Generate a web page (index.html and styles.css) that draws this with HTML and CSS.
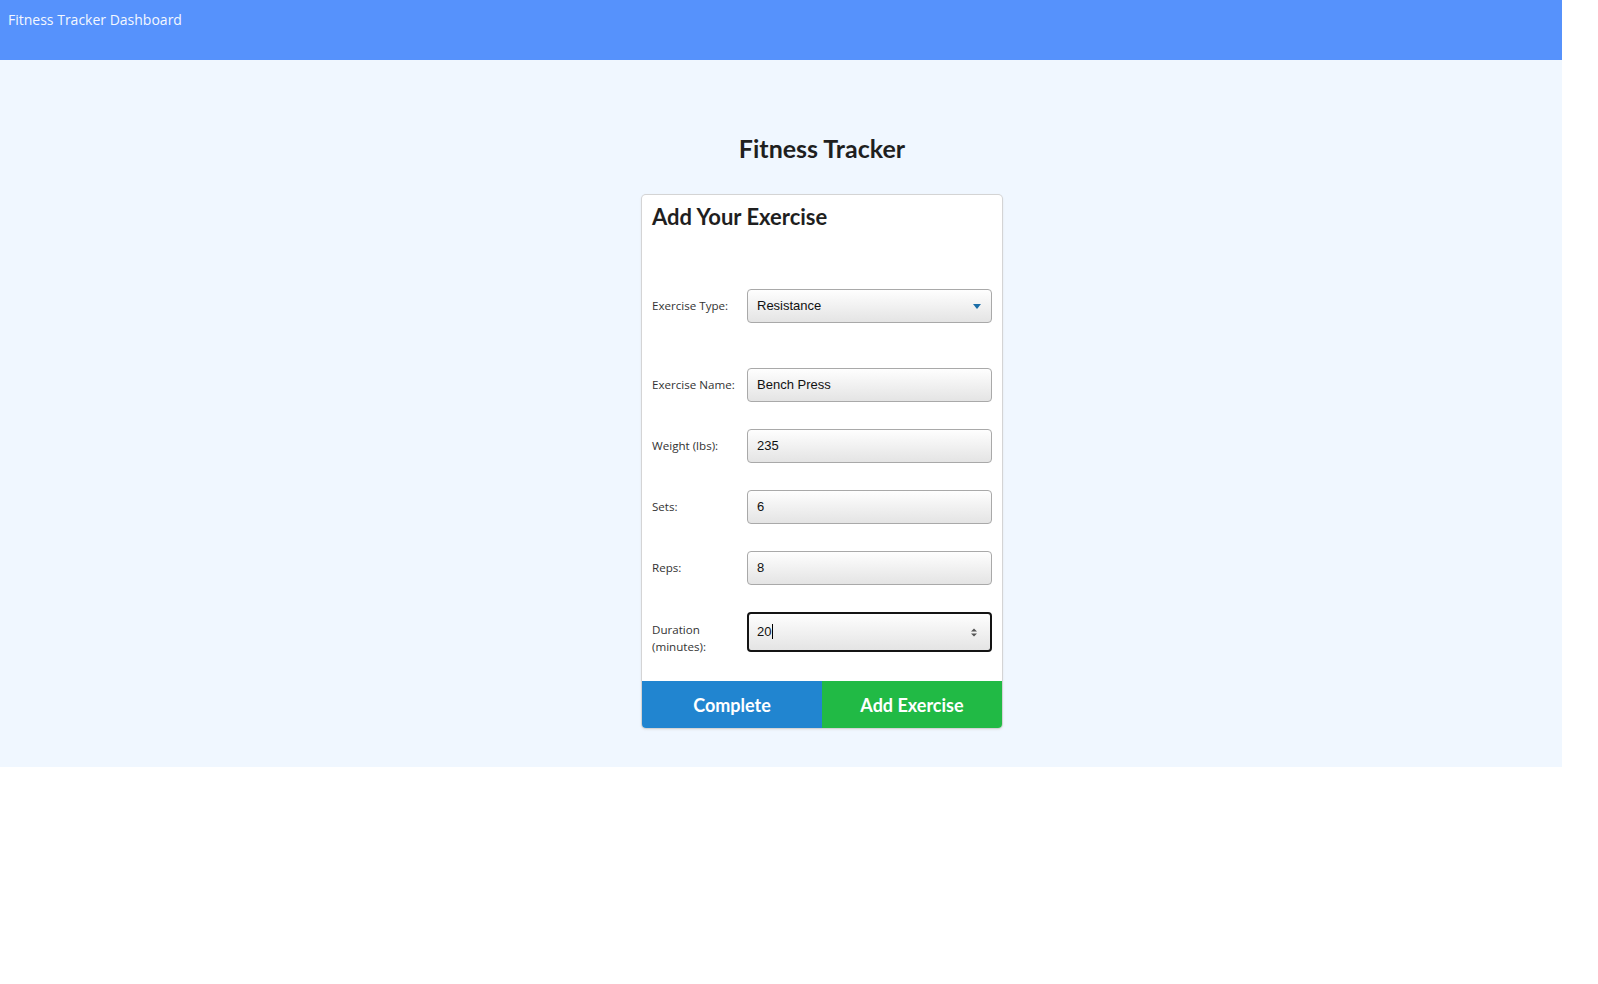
FILE: index.html
```html
<!DOCTYPE html>
<html lang="en">
<head>
<meta charset="utf-8">
<title>Fitness Tracker Dashboard</title>
<link rel="stylesheet" href="styles.css">
</head>
<body>
<div class="app">
  <header class="topbar">Fitness Tracker Dashboard</header>
  <main class="main">
    <div class="content">
      <h1 class="page-title">Fitness Tracker</h1>
      <div class="card">
        <h2 class="card-title">Add Your Exercise</h2>
        <form class="form">
          <div class="row row-type">
            <label class="label">Exercise Type:</label>
            <div class="field select">
              <span>Resistance</span>
              <svg class="caret-down" width="8" height="5" viewBox="0 0 8 5"><path d="M0 0h8L4 5z" fill="#1b6ea8"/></svg>
            </div>
          </div>
          <div class="row row-first">
            <label class="label">Exercise Name:</label>
            <div class="field"><span>Bench Press</span></div>
          </div>
          <div class="row">
            <label class="label">Weight (lbs):</label>
            <div class="field"><span>235</span></div>
          </div>
          <div class="row">
            <label class="label">Sets:</label>
            <div class="field"><span>6</span></div>
          </div>
          <div class="row">
            <label class="label">Reps:</label>
            <div class="field"><span>8</span></div>
          </div>
          <div class="row row-duration">
            <label class="label label-two">Duration<br>(minutes):</label>
            <div class="field focused">
              <span>20</span><span class="text-caret"></span>
              <svg class="spinner" width="6" height="9" viewBox="0 0 6 9"><path d="M0 3.5L3 0.5L6 3.5z M0 5.5L3 8.5L6 5.5z" fill="#555"/></svg>
            </div>
          </div>
        </form>
        <div class="buttons">
          <button type="button" class="btn btn-blue">Complete</button>
          <button type="button" class="btn btn-green">Add Exercise</button>
        </div>
      </div>
    </div>
  </main>
</div>
</body>
</html>
```
FILE: styles.css
```css
* { box-sizing: border-box; }
html, body { margin: 0; padding: 0; background: #ffffff; }
body { font-family: Lato, "Open Sans", sans-serif; color: rgba(0,0,0,0.87); }

.app { width: 1562px; }

.topbar {
  height: 60px;
  background: #5692fc;
  color: #f4f8ff;
  font-family: "Open Sans", "Noto Sans", sans-serif;
  font-size: 14px;
  padding: 10px 8px 0;
  line-height: 20px;
}

.main {
  background: #f0f7ff;
  height: 707px;
  padding: 72px 0 0 82px;
}

.content {
  display: flex;
  flex-direction: column;
  align-items: center;
}

.page-title {
  margin: 0;
  font-family: Lato, sans-serif;
  font-weight: 700;
  font-size: 25px;
  line-height: 32px;
  color: #1f1f1f;
}

.card {
  margin-top: 31px;
  width: 360px;
  background: #fff;
  border-radius: 4px;
  box-shadow: 0 1px 3px 0 #d4d4d5, 0 0 0 1px #d4d4d5;
  overflow: hidden;
}

.card-title {
  margin: 0;
  padding: 7px 10px 0;
  font-family: Lato, sans-serif;
  font-weight: 700;
  font-size: 22px;
  line-height: 29px;
  color: #1f1f1f;
}

.form {
  padding: 58px 9px 0 10px;
  display: flex;
  flex-direction: column;
  gap: 27px;
}

.row {
  display: flex;
  align-items: center;
}
.row-first { margin-top: 18px; }

.label {
  width: 95px;
  flex: none;
  font-family: "Open Sans", "Noto Sans", sans-serif;
  font-size: 11.6px;
  color: #333;
  line-height: 16px;
}
.label-two { line-height: 17px; margin: 6px 0 -6px; }

.field {
  position: relative;
  width: 245px;
  height: 34px;
  border: 1px solid #a9a9a9;
  border-radius: 4px;
  background: linear-gradient(#fefefe, #e4e4e4);
  display: flex;
  align-items: center;
  padding: 0 9px;
  font-family: "Liberation Sans", Arial, sans-serif;
  font-size: 13px;
  color: #111;
}
.field span { position: relative; top: -1px; }

.caret-down { position: absolute; right: 10px; top: 14px; }

.field.focused {
  height: 40px;
  border: 2px solid #141414;
  padding: 0 8px;
}
.text-caret {
  display: inline-block;
  width: 1px;
  height: 15px;
  background: #000;
  margin-left: 1px;
}
.spinner { position: absolute; right: 13px; top: 14px; }

.buttons {
  display: flex;
  margin-top: 29px;
}
.btn {
  flex: 1;
  height: 47px;
  border: 0;
  margin: 0;
  font-family: Lato, sans-serif;
  font-weight: 700;
  font-size: 18px;
  color: #fff;
  cursor: pointer;
}
.btn-blue { background: #2185d0; }
.btn-green { background: #21ba45; }
```
